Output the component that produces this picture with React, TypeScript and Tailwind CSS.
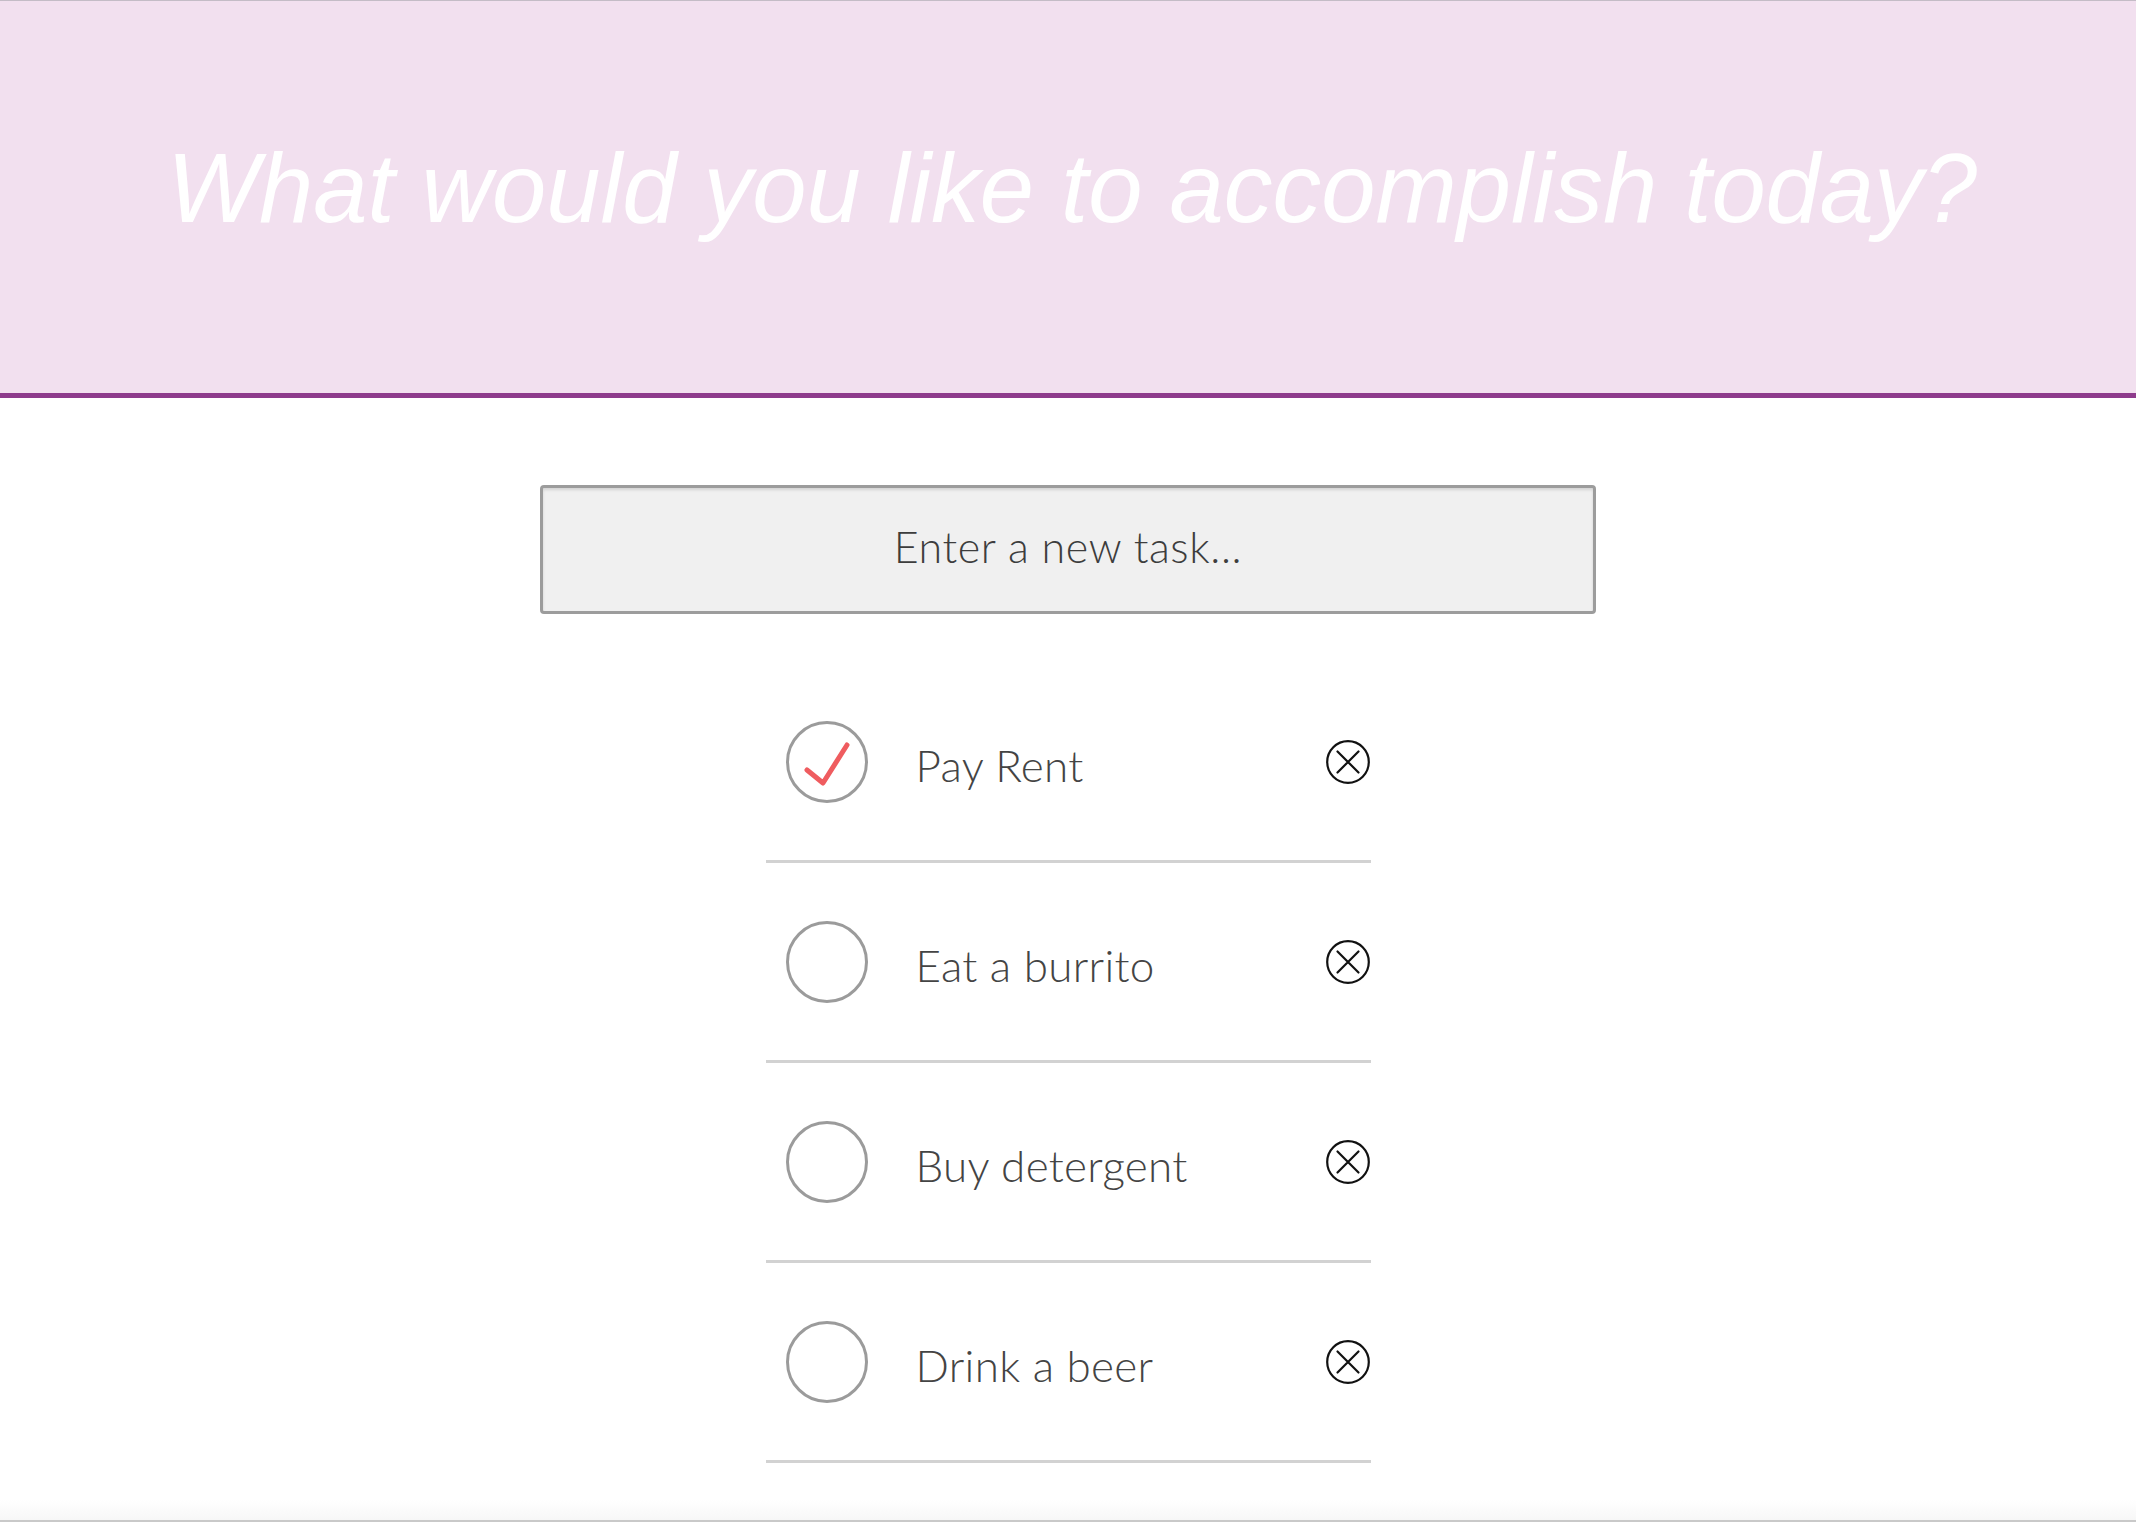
const tasks = [
  { id: 1, title: 'Pay Rent', done: true },
  { id: 2, title: 'Eat a burrito', done: false },
  { id: 3, title: 'Buy detergent', done: false },
  { id: 4, title: 'Drink a beer', done: false },
]

function CheckCircle({ done }: { done: boolean }) {
  return (
    <svg width="82" height="82" viewBox="0 0 82 82" className="shrink-0">
      <circle cx="41" cy="41" r="39.5" fill="none" stroke="#9b9b9b" strokeWidth="3" />
      {done && (
        <polyline
          points="21,49 37,62 61,24"
          fill="none"
          stroke="#ef5c5f"
          strokeWidth="5"
          strokeLinecap="round"
          strokeLinejoin="round"
        />
      )}
    </svg>
  )
}

function RemoveIcon() {
  return (
    <svg width="44" height="44" viewBox="0 0 44 44" className="shrink-0">
      <circle cx="22" cy="22" r="20.8" fill="none" stroke="#111" strokeWidth="2.2" />
      <path d="M11.5 11.5 L32.5 32.5 M32.5 11.5 L11.5 32.5" stroke="#111" strokeWidth="2.2" strokeLinecap="round" />
    </svg>
  )
}

export default function App() {
  return (
    <div className="min-h-[1522px] flex flex-col bg-white font-['Lato','Noto_Sans',sans-serif]">
      {/* Header */}
      <header className="h-[398px] shrink-0 border-t border-[#c4bcc6] border-b-[5px] border-b-[#8e3b8c] bg-[#f2e0ef] flex justify-center pt-[139px]">
        <h1 className="text-[97.5px] leading-none italic font-normal text-white font-['Liberation_Sans',Arial,sans-serif] pl-[8px]">
          What would you like to accomplish today?
        </h1>
      </header>

      {/* Input */}
      <div className="flex justify-center mt-[87px]">
        <input
          type="text"
          placeholder="Enter a new task..."
          className="w-[1056px] h-[129px] rounded-[4px] border-[3px] border-[#9c9c9c] bg-[#f0f0f0] shadow-[inset_0_2px_3px_rgba(0,0,0,0.12)] pb-[6px] text-center text-[43px] tracking-[0.6px] font-light text-[#3d3d3d] placeholder:text-[#3d3d3d] outline-none font-['Lato','Noto_Sans',sans-serif]"
        />
      </div>

      {/* Task list */}
      <ul className="w-[605px] mx-auto mt-[49px]">
        {tasks.map((task) => (
          <li key={task.id} className="h-[200px] flex items-center border-b-[3px] border-[#d2d2d2]">
            <div className="ml-[20px]">
              <CheckCircle done={task.done} />
            </div>
            <span className="ml-[48px] text-[44px] tracking-[0.3px] font-light text-[#444] leading-none pt-[6px]">{task.title}</span>
            <div className="ml-auto mr-[1px]">
              <RemoveIcon />
            </div>
          </li>
        ))}
      </ul>

      <div className="mt-auto h-[22px] bg-gradient-to-b from-white to-[#f7f7f7] border-b-2 border-[#c9c9c9]" />
    </div>
  )
}
